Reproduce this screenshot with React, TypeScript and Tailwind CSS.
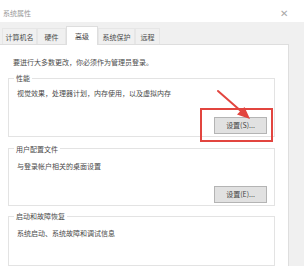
import React from "react";

const font = { fontFamily: '"Noto Sans CJK SC", "Noto Sans", sans-serif' };

function Tab({ label, active, w }: { label: string; active?: boolean; w: string }) {
  return (
    <div
      className={
        active
          ? `${w} h-[19px] bg-white border border-b-0 border-[#dedede] flex items-center justify-center text-[#444] -mb-px relative z-10`
          : `${w} h-[16px] bg-[#f0f0f0] border border-b-0 border-[#e6e6e6] flex items-center justify-center text-[#4a4a4a]`
      }
    >
      {label}
    </div>
  );
}

function Btn({ label }: { label: string }) {
  return (
    <div className="self-end mr-[7px] w-[53px] h-[17px] bg-[#e1e1e1] border border-[#b4b4b4] flex items-center justify-center text-[7px] text-[#444] leading-none">
      {label}
    </div>
  );
}

export default function App() {
  return (
    <div className="w-[304px] h-[266px] overflow-hidden relative bg-[#f0f0f0] text-[7px] leading-[10px]" style={font}>
      {/* title bar */}
      <div className="h-[22px] bg-white flex items-center justify-between pl-[3px] pr-[16px] pt-[4px]">
        <span className="text-[#999]">系统属性</span>
        <span className="text-[#a8a8a8] text-[10px]">✕</span>
      </div>
      {/* tabs */}
      <div className="h-[22px] flex items-end pl-[2px] gap-0">
        <Tab label="计算机名" w="w-[35px]" />
        <Tab label="硬件" w="w-[29px]" />
        <Tab label="高级" w="w-[32px]" active />
        <Tab label="系统保护" w="w-[37px]" />
        <Tab label="远程" w="w-[25px]" />
      </div>
      {/* panel */}
      <div className="w-[289px] h-[222px] bg-white border-t border-r border-[#dedede] pl-[8px] pt-[12px] flex flex-col">
        <div className="pl-[5px] text-[#4a4a4a]">要进行大多数更改，你必须作为管理员登录。</div>

        <fieldset className="mt-[6px] w-[267px] h-[70px] border border-[#e3e3e3] flex flex-col">
          <legend className="ml-[5px] px-[2px] text-[#4a4a4a]">性能</legend>
          <div className="pl-[8px] pt-[5px] text-[#4a4a4a]">视觉效果，处理器计划，内存使用，以及虚拟内存</div>
          <div className="mt-[19px] self-end">
            <Btn label="设置(S)..." />
          </div>
        </fieldset>

        <fieldset className="mt-[7px] w-[267px] h-[69px] border border-[#e3e3e3] flex flex-col">
          <legend className="ml-[5px] px-[2px] text-[#4a4a4a]">用户配置文件</legend>
          <div className="pl-[8px] pt-[7px] text-[#4a4a4a]">与登录帐户相关的桌面设置</div>
          <div className="mt-[15px] self-end">
            <Btn label="设置(E)..." />
          </div>
        </fieldset>

        <fieldset className="mt-[5px] w-[267px] h-[60px] border border-[#e3e3e3] flex flex-col">
          <legend className="ml-[5px] px-[2px] text-[#4a4a4a]">启动和故障恢复</legend>
          <div className="pl-[8px] pt-[7px] text-[#4a4a4a]">系统启动、系统故障和调试信息</div>
        </fieldset>
      </div>

      {/* red annotation */}
      <div className="absolute left-[200px] top-[108px] w-[73px] h-[34px] border-2 border-[#e2453f] pointer-events-none" />
      <svg className="absolute left-0 top-0 pointer-events-none" width="304" height="266" viewBox="0 0 304 266">
        <line x1="218" y1="91" x2="242" y2="112" stroke="#e2453f" strokeWidth="2" strokeLinecap="round" />
        <polygon points="250,119 237,114.5 244.5,107" fill="#e2453f" />
      </svg>
    </div>
  );
}
